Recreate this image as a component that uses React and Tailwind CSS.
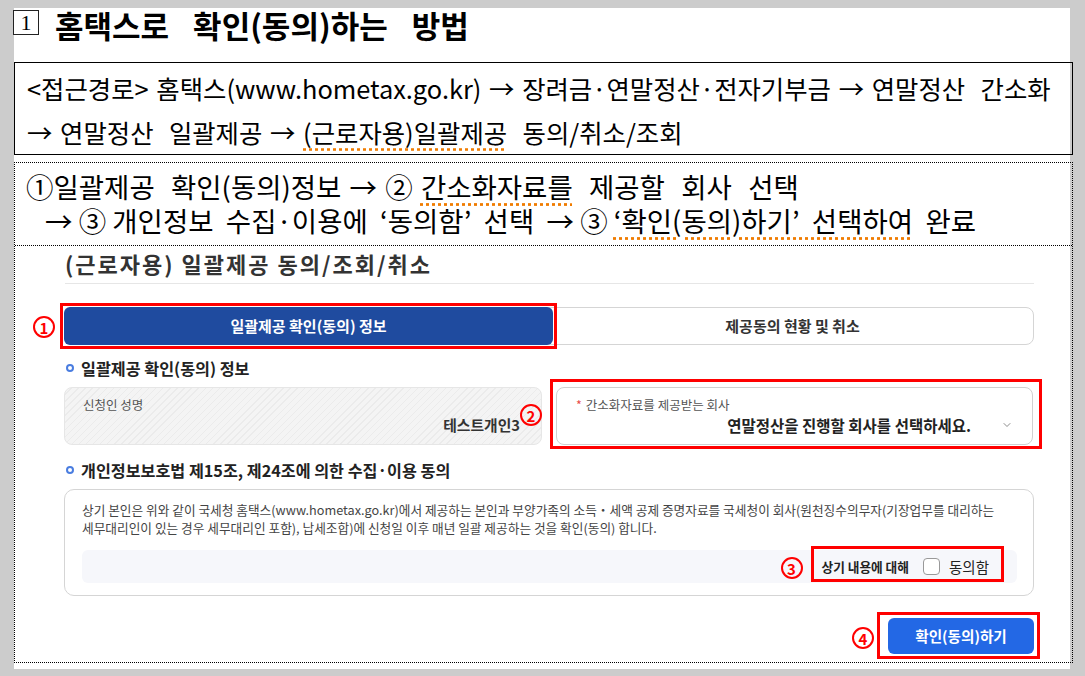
import { ChevronDown } from "lucide-react";

function Mark({ n, className }) {
  return (
    <span
      className={`absolute flex h-[22px] w-[22px] items-center justify-center rounded-full border-2 border-[#ff0000] text-[15px] font-bold leading-none text-[#ff0000] ${className}`}
    >
      {n}
    </span>
  );
}

function RedBox({ className }) {
  return <span className={`pointer-events-none absolute border-[3px] border-[#ff0000] ${className}`} />;
}

function Bullet({ children }) {
  return (
    <div className="flex h-[20px] items-center">
      <span className="ml-[2px] h-[8px] w-[8px] rounded-full border-2 border-[#4a7de0]" />
      <span className="ml-[7px] text-[16.2px] font-bold leading-[20px] text-[#222]">{children}</span>
    </div>
  );
}

const orange = "underline decoration-dotted decoration-[#f07c00] underline-offset-[5px]";

export default function App() {
  return (
    <div className="h-[676px] w-[1085px] overflow-hidden bg-[#cccccc] pl-[14px] pt-[15px] font-['Noto_Sans_CJK_KR','Noto_Sans',sans-serif] text-black">
      <div className="h-[661px] w-[1056px] bg-white">
        {/* title */}
        <div className="-ml-px -mt-[7px] flex h-[33px] items-start">
          <span className="mt-[2px] flex h-[25px] w-[26px] items-center justify-center border border-[#222] font-['Liberation_Serif',serif] text-[22px] leading-none">
            1
          </span>
          <h1 className="ml-[16px] text-[31px] font-bold leading-[33px] [word-spacing:17px]">
            홈택스로 확인(동의)하는 방법
          </h1>
        </div>

        {/* route */}
        <div className="mt-[21px] h-[93px] w-[1059px] whitespace-nowrap border border-black pl-[12px] pt-[3px] text-[25.4px] leading-[44px] [word-spacing:2px]">
          <div>&lt;접근경로&gt; 홈택스(www.hometax.go.kr) → 장려금·연말정산·전자기부금 → 연말정산&nbsp; 간소화</div>
          <div>
            → 연말정산&nbsp; 일괄제공 → <span className={orange}>(근로자용)일괄제공</span>&nbsp; 동의/취소/조회
          </div>
        </div>

        {/* steps */}
        <div className="mt-[7px] h-[501px] w-[1059px] border border-dotted border-black">
          <div className="h-[83px] whitespace-nowrap border-b border-dotted border-black pl-[11px] pt-[6px] text-[27.5px] leading-[34px]">
            <div className="[word-spacing:2px]">
              ①일괄제공&nbsp; 확인(동의)정보 → ② <span className={orange}>간소화자료를</span>&nbsp; 제공할&nbsp; 회사&nbsp; 선택
            </div>
            <div className="pl-[19px]">
              → ③ 개인정보&nbsp; 수집·이용에&nbsp; ‘동의함’&nbsp; 선택&nbsp; → ③{" "}
              <span className={orange}>‘확인(동의)하기’&nbsp; 선택하여</span>&nbsp; 완료
            </div>
          </div>

          {/* hometax capture */}
          <div className="ml-[49px] w-[970px]">
            <div className="ml-px pt-[5px] text-[22px] font-semibold leading-[24px] tracking-[2px] text-[#333]">
              (근로자용) 일괄제공 동의/조회/취소
            </div>
            <div className="ml-px mt-[8px] h-px bg-[#e6e6e6]" />

            {/* tabs */}
            <div className="mt-[23px] flex h-[38px] rounded-[8px] border border-[#d5d5d5]">
              <div className="relative -m-px flex h-[38px] w-[489px] items-center justify-center rounded-[6px] bg-[#1f4b9f] text-[15px] font-bold text-white">
                일괄제공 확인(동의) 정보
                <RedBox className="-inset-[4px]" />
                <Mark n="1" className="-left-[31px] top-[9px]" />
              </div>
              <div className="flex flex-1 items-center justify-center text-[15px] font-bold text-[#333]">
                제공동의 현황 및 취소
              </div>
            </div>

            <div className="mt-[13px]">
              <Bullet>일괄제공 확인(동의) 정보</Bullet>
            </div>

            {/* fields */}
            <div className="mt-[9px] grid h-[58px] grid-cols-[478px_477px] gap-[14px]">
              <div className="relative flex flex-col rounded-[8px] border border-[#e6e6e6] bg-[image:repeating-linear-gradient(135deg,#f4f4f4_0px,#f4f4f4_4px,#ebebeb_4px,#ebebeb_5px)] pl-[18px] pr-[21px] pt-[9px]">
                <span className="text-[12.5px] leading-[16px] text-[#555]">신청인 성명</span>
                <span className="mt-[2px] self-end text-[14.8px] font-bold leading-[20px] text-[#333]">테스트개인3</span>
                <Mark n="2" className="-right-px top-[16px]" />
              </div>
              <div className="relative flex flex-col rounded-[8px] border border-[#d0d0d0] bg-white pl-[19px] pr-[19px] pt-[9px]">
                <span className="text-[12.5px] leading-[16px] text-[#555]">
                  <span className="mr-[4px] text-[#e84a4a]">*</span>간소화자료를 제공받는 회사
                </span>
                <div className="mt-[2px] flex items-center justify-end">
                  <span className="text-[15.5px] font-bold leading-[20px] text-[#222]">연말정산을 진행할 회사를 선택하세요.</span>
                  <ChevronDown className="ml-[30px] h-[12px] w-[12px] text-[#666]" strokeWidth={1.5} />
                </div>
                <RedBox className="-bottom-[5px] -left-[7px] -right-[10px] -top-[9px]" />
              </div>
            </div>

            <div className="mt-[15px]">
              <Bullet>개인정보보호법 제15조, 제24조에 의한 수집·이용 동의</Bullet>
            </div>

            {/* consent */}
            <div className="mt-[9px] h-[107px] rounded-[10px] border border-[#d5d5d5] pl-[17px] pr-[16px] pt-[11px]">
              <div className="whitespace-nowrap text-[12.7px] leading-[18px] text-[#444]">
                <div>
                  상기 본인은 위와 같이 국세청 홈택스(www.hometax.go.kr)에서 제공하는 본인과 부양가족의 소득・세액 공제 증명자료를 국세청이 회사(원천징수의무자(기장업무를 대리하는
                </div>
                <div>세무대리인이 있는 경우 세무대리인 포함), 납세조합)에 신청일 이후 매년 일괄 제공하는 것을 확인(동의) 합니다.</div>
              </div>
              <div className="mt-[13px] flex h-[33px] items-center justify-end rounded-[6px] bg-[#f6f7fb] pr-[28px]">
                <div className="relative flex h-full items-center">
                  <span className="text-[12.7px] font-bold text-[#222]">상기 내용에 대해</span>
                  <span className="ml-[14px] h-[17px] w-[17px] rounded-[4px] border border-[#999] bg-white" />
                  <span className="ml-[9px] text-[14.5px] text-[#222]">동의함</span>
                  <RedBox className="-left-[11px] -right-[15px] -top-[4px] bottom-px" />
                  <Mark n="3" className="-left-[41px] top-[7px]" />
                </div>
              </div>
            </div>

            {/* button */}
            <div className="mt-[22px] flex justify-end">
              <button className="relative h-[36px] w-[146px] rounded-[6px] bg-[#2368e5] text-[14.6px] font-bold text-white">
                확인(동의)하기
                <RedBox className="-bottom-[5px] -left-[11px] -right-[6px] -top-[6px]" />
                <Mark n="4" className="-left-[36px] top-[9px]" />
              </button>
            </div>
          </div>
        </div>
      </div>
    </div>
  );
}
